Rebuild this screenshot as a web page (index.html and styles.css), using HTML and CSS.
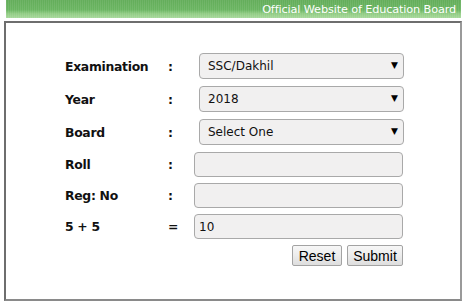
FILE: index.html
```html
<!DOCTYPE html>
<html>
<head>
<meta charset="utf-8">
<link rel="stylesheet" href="styles.css">
</head>
<body>
<div class="topbar"><span class="topbar-text">Official Website of Education Board</span></div>
<div class="panel">
  <form class="form">
    <div class="row row-select">
      <span class="label">Examination</span><span class="colon">:</span>
      <span class="select-wrap"><select class="select"><option>SSC/Dakhil</option></select></span>
    </div>
    <div class="row row-select">
      <span class="label">Year</span><span class="colon">:</span>
      <span class="select-wrap"><select class="select"><option>2018</option></select></span>
    </div>
    <div class="row row-select">
      <span class="label">Board</span><span class="colon">:</span>
      <span class="select-wrap"><select class="select"><option>Select One</option></select></span>
    </div>
    <div class="row row-input">
      <span class="label">Roll</span><span class="colon">:</span>
      <input class="input" type="text">
    </div>
    <div class="row row-input">
      <span class="label">Reg: No</span><span class="colon">:</span>
      <input class="input" type="text">
    </div>
    <div class="row row-input">
      <span class="label">5 + 5</span><span class="colon">=</span>
      <input class="input" type="text" value="10">
    </div>
    <div class="actions">
      <button class="btn btn-reset" type="button">Reset</button>
      <button class="btn btn-submit" type="button">Submit</button>
    </div>
  </form>
</div>
</body>
</html>
```
FILE: styles.css
```css
html, body {
  margin: 0;
  padding: 0;
  background: #ffffff;
}
body {
  width: 465px;
  height: 306px;
  overflow: hidden;
  font-family: "DejaVu Sans", Verdana, sans-serif;
}
.topbar {
  margin: 0 4px 0 6px;
  height: 18px;
  background:
    repeating-linear-gradient(90deg, rgba(255,255,255,0.08) 0 1px, transparent 1px 2px),
    linear-gradient(180deg, #63ad5a 0%, #6ab561 55%, #8fcb82 75%, #a7d89b 100%);
  display: flex;
  justify-content: flex-end;
  align-items: center;
}
.topbar-text {
  color: #ffffff;
  font-size: 11.3px;
  padding-right: 5px;
  letter-spacing: -0.15px;
}
.panel {
  margin: 3px 3px 0 4px;
  height: 276px;
  border: 2px solid #7a7a7a;
  border-top-color: #6e6e6e;
  border-left-color: #6e6e6e;
  border-right-color: #9a9a9a;
  border-bottom-color: #8a8a8a;
  background: #ffffff;
}
.form {
  padding: 30px 0 0 59px;
  display: flex;
  flex-direction: column;
  gap: 7px;
}
.row {
  display: grid;
  grid-template-columns: 103px 26px 210px;
  align-items: center;
}
.row-select { height: 26px; }
.row-input { height: 25px; }
.row-input + .row-input { margin-top: -1px; }
.label {
  font-weight: bold;
  font-size: 12.4px;
  color: #111111;
  letter-spacing: -0.3px;
}
.colon {
  font-weight: bold;
  font-size: 12.4px;
  color: #111111;
}
.select-wrap {
  position: relative;
  margin-left: 5px;
  width: 205px;
  height: 26px;
  display: block;
}
.select-wrap::after {
  content: "\25BC";
  position: absolute;
  right: 6px;
  top: 7px;
  font-size: 9px;
  color: #000000;
  pointer-events: none;
}
.select {
  -webkit-appearance: none;
  appearance: none;
  width: 205px;
  height: 26px;
  margin: 0;
  padding: 0 0 0 8px;
  border: 1px solid #a9a9a9;
  border-radius: 4px;
  background: #f1f0f0;
  font-family: "DejaVu Sans", Verdana, sans-serif;
  font-size: 12px;
  color: #111111;
}
.input {
  box-sizing: border-box;
  width: 209px;
  height: 25px;
  margin: 0;
  padding: 0 0 0 4px;
  border: 1px solid #a9a9a9;
  border-radius: 4px;
  background: #f1f0f0;
  font-family: "DejaVu Sans", Verdana, sans-serif;
  font-size: 12px;
  color: #111111;
  outline: none;
}
.actions {
  margin-top: -1px;
  width: 338px;
  display: flex;
  justify-content: flex-end;
  gap: 5px;
}
.btn {
  box-sizing: border-box;
  height: 21px;
  margin: 0;
  padding: 0;
  border: 1px solid #a3a3a3;
  border-radius: 2px;
  background: linear-gradient(180deg, #f7f7f7 0%, #ececec 50%, #dedede 100%);
  font-family: "Liberation Sans", Arial, sans-serif;
  font-size: 14px;
  color: #000000;
  text-align: center;
}
.btn-reset { width: 50px; }
.btn-submit { width: 56px; }
```
